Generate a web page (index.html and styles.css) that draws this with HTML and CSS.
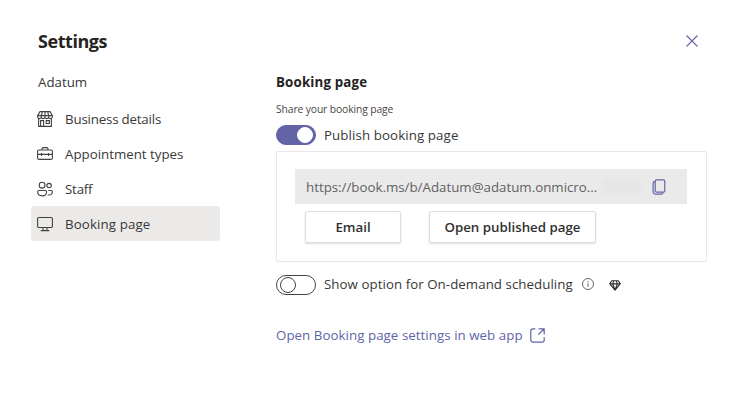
FILE: index.html
```html
<!DOCTYPE html>
<html lang="en">
<head>
<meta charset="utf-8">
<title>Settings</title>
<link rel="stylesheet" href="styles.css">
</head>
<body>
<div class="dialog">
  <header class="header">
    <h1 class="title">Settings</h1>
    <button class="close" aria-label="Close"><svg width="12" height="12" viewBox="0 0 12 12"><path d="M.5.5l11 11M11.5.5l-11 11"/></svg></button>
  </header>
  <div class="columns">
    <nav class="sidebar">
      <div class="org"><span>Adatum</span></div>
      <a class="item">
        <svg class="icon" width="16" height="16" viewBox="0 0 16 16"><path d="M3 .6h10l2.400 4v1.200a1.800 1.800 0 0 1-3.700 0 1.800 1.800 0 0 1-3.700 0 1.800 1.800 0 0 1-3.700 0 1.800 1.800 0 0 1-3.700 0V4.600zM.8 4.600h14.400M5.300.8l-1 3.800v1.200M8 .8v5M10.700.8l1 3.800v1.200M1.600 7.600v7.800h12.800V7.600M3.600 15.200V9.600h3v5.600M9.200 9.600h3.200v2.900H9.200z"/></svg>
        <span class="t-business">Business details</span>
      </a>
      <a class="item">
        <svg class="icon" width="16" height="16" viewBox="0 0 16 16"><path d="M5 4V2.900A1.300 1.300 0 0 1 6.300 1.600h3.400A1.300 1.300 0 0 1 11 2.900V4M2.100 4h11.800a1.500 1.500 0 0 1 1.500 1.500v6.400a1.500 1.500 0 0 1-1.500 1.500H2.100A1.500 1.500 0 0 1 .6 11.900V5.500A1.500 1.500 0 0 1 2.100 4zM.6 8.400h14.800M4.500 7v3M11.500 7v3"/></svg>
        <span>Appointment types</span>
      </a>
      <a class="item">
        <svg class="icon" width="16" height="16" viewBox="0 0 16 16"><circle cx="5.100" cy="4.200" r="2.900"/><circle cx="12.100" cy="4.600" r="2.200"/><path d="M2 9.500h6.300a1.300 1.300 0 0 1 1.300 1.300c0 2.500-1.600 4.100-4.400 4.100S.7 13.300.7 10.800A1.300 1.300 0 0 1 2 9.500zM11.300 9.500h2.800a1.300 1.300 0 0 1 1.300 1.300c0 2.300-1.600 3.600-4.700 3.200"/></svg>
        <span class="t-staff">Staff</span>
      </a>
      <a class="item item-active">
        <svg class="icon" width="16" height="16" viewBox="0 0 16 16"><path d="M1.800 1.500h12.400a1.200 1.200 0 0 1 1.200 1.200v7.600a1.200 1.200 0 0 1-1.200 1.200H1.800A1.200 1.200 0 0 1 .6 10.300V2.700a1.200 1.200 0 0 1 1.200-1.200zM6 11.500v3M10 11.500v3M3.800 14.600h8.400"/></svg>
        <span class="t-booking">Booking page</span>
      </a>
    </nav>
    <main class="content">
      <h2 class="heading">Booking page</h2>
      <p class="hint">Share your booking page</p>
      <div class="option">
        <span class="toggle toggle-on"></span>
        <span class="t-publish">Publish booking page</span>
      </div>
      <section class="card">
        <div class="url">
          <span class="url-text">https://book.ms/b/Adatum@adatum.onmicro...</span>
          <span class="smudge"></span>
          <svg class="copy" width="14" height="16" viewBox="0 0 14 16"><rect x="3.200" y=".8" width="9.600" height="12.400" rx="1.500"/><path d="M3 2.400a2 2 0 0 0-1.900 2v8.200a2.600 2.600 0 0 0 2.600 2.600h5.500a2 2 0 0 0 1.900-1.600"/></svg>
        </div>
        <div class="actions">
          <button class="button button-email">Email</button>
          <button class="button button-open">Open published page</button>
        </div>
      </section>
      <div class="option option-demand">
        <span class="toggle"></span>
        <span class="t-demand">Show option for On-demand scheduling</span>
        <svg class="info" width="12" height="12" viewBox="0 0 12 12"><circle cx="6" cy="6" r="5.500"/><path d="M6 5.200v3.600M6 3v1.200"/></svg>
        <svg class="gem" width="12" height="11" viewBox="0 0 12 11"><path d="M2.800.7h6.400l2.100 3L6 10.200.7 3.700zM.7 3.900h10.600M4.700.8L3.700 3.900 6 10l2.300-6.100-1-3.100"/></svg>
      </div>
      <a class="link"><span class="t-link">Open Booking page settings in web app</span>
        <svg width="15" height="15" viewBox="0 0 15 15"><path d="M5.300.8H3A2.200 2.200 0 0 0 .8 3v9A2.200 2.200 0 0 0 3 14.200h9a2.200 2.200 0 0 0 2.200-2.200V9.300M8.600.8h5.600v5.600M14 1L8.300 6.700"/></svg>
      </a>
    </main>
  </div>
</div>
</body>
</html>
```
FILE: styles.css
```css
* { box-sizing: border-box; }
body { margin: 0; background: #fff; color: #383838; font: 13.3px/20px "Open Sans", "Noto Sans", sans-serif; }
.dialog { width: 738px; height: 402px; padding: 28px 31px 0; }
.header { display: flex; justify-content: space-between; height: 41px; padding: 0 9px 0 7px; }
.title { margin: 0; font-size: 18px; line-height: 27px; font-weight: 700; color: #252423; letter-spacing: -.45px; }
.close { width: 12px; height: 12px; margin-top: 7px; padding: 0; border: 0; background: none; }
svg { display: block; flex: none; fill: none; }
.close svg { stroke: #6264a7; stroke-width: 1.1; }
.columns { display: grid; grid-template-columns: 189px 431px; column-gap: 56px; }
.org { height: 32px; padding: 3px 7px; }
.sidebar, .option, .url, .link, .hint { white-space: nowrap; }
.item { display: flex; align-items: center; gap: 12px; height: 35px; padding-left: 6px; border-radius: 3px; }
.item-active { background: #ebeae9; }
.icon { stroke: #424242; stroke-width: 1.1; }
.t-business { letter-spacing: -.18px; }
.t-staff { letter-spacing: -.2px; }
.t-booking { letter-spacing: .12px; }
.heading { margin: 3px 0 0; font-size: 13.3px; line-height: 20px; font-weight: 700; color: #252423; letter-spacing: .17px; }
.hint { margin: 9px 0 0; font-size: 10.3px; line-height: 16px; color: #484644; letter-spacing: -.1px; }
.option { display: flex; align-items: center; height: 20px; margin-top: 8px; }
.toggle { display: flex; align-items: center; width: 40px; height: 20px; margin-right: 8px; padding: 0 3px; border: 1px solid #424242; border-radius: 10px; }
.toggle::before { content: ""; width: 14px; height: 14px; border: 1px solid #424242; border-radius: 50%; }
.toggle-on { justify-content: flex-end; padding-right: 2px; border-color: #6264a7; background: #6264a7; }
.toggle-on::before { border-color: #fff; background: #fff; }
.t-publish { letter-spacing: .1px; }
.card { height: 111px; margin-top: 6px; padding: 17px 19px 0 18px; border: 1px solid #e8e8e8; border-radius: 2px; }
.url { display: flex; align-items: center; height: 35px; padding: 0 21px 0 11px; background: #eaeaea; color: #616161; }
.url-text { flex: 0 0 297px; }
.smudge { width: 38px; height: 14px; border-radius: 0 8px 8px 0; background: #e6e6e6; filter: blur(1.5px); }
.copy { margin-left: auto; stroke: #6264a7; stroke-width: 1.2; }
.actions { display: flex; gap: 28px; padding: 7px 0 0 10px; }
.button { display: flex; align-items: center; justify-content: center; height: 32px; padding: 0; border: 1px solid #dedede; border-radius: 2px; background: #fff; box-shadow: 0 1px 2px rgba(0, 0, 0, .14); font: inherit; font-weight: 600; color: #303030; white-space: nowrap; }
.button-email { width: 96px; }
.button-open { width: 167px; }
.option-demand { margin-top: 13px; }
.t-demand { width: 249px; margin-top: -2px; letter-spacing: .05px; }
.info { margin: -2px 0 0 9px; stroke: #555; stroke-width: .9; }
.gem { margin-left: 15px; stroke: #303030; stroke-width: 1.1; }
.link { display: flex; align-items: center; height: 20px; margin-top: 30px; color: #6264a7; }
.t-link { width: 254px; letter-spacing: .05px; }
.link svg { stroke: #6264a7; stroke-width: 1.2; }
```
